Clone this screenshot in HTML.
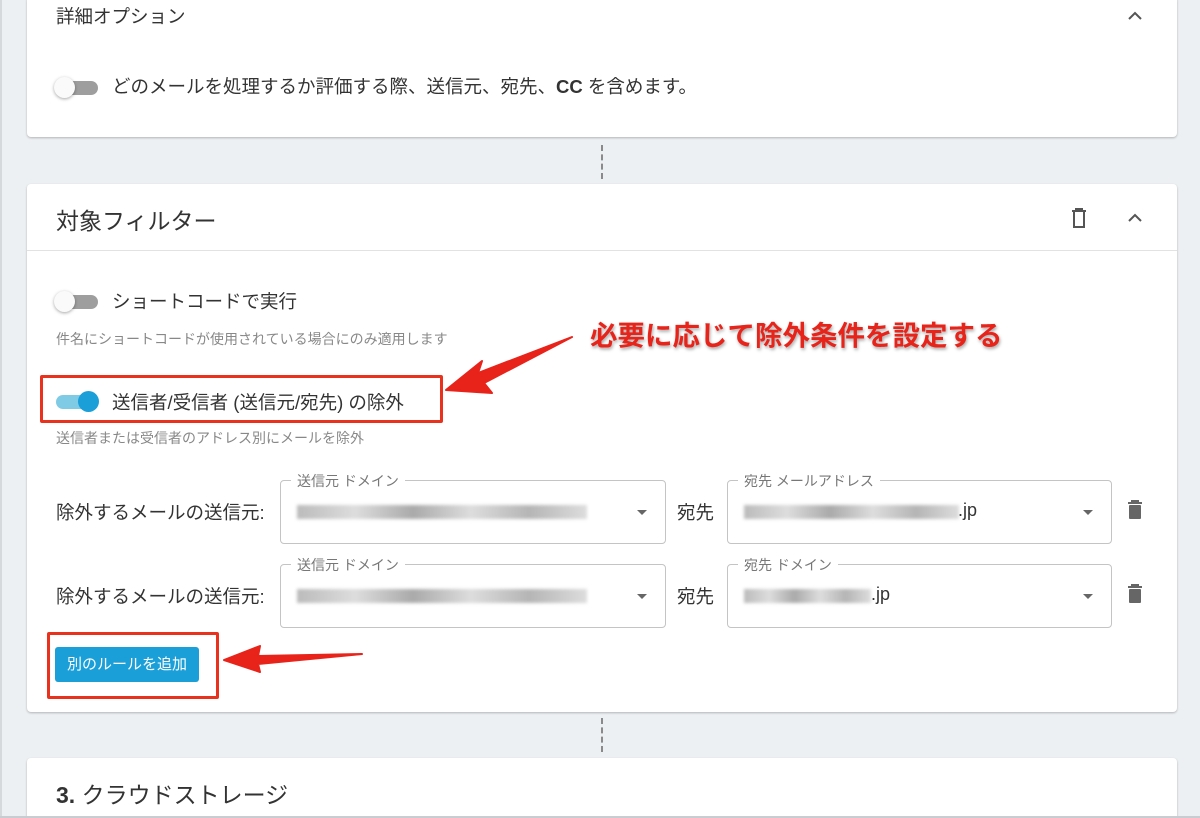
<!DOCTYPE html>
<html style="overflow:hidden;width:1200px;height:818px"><head><meta charset="utf-8"><style>
*{box-sizing:border-box;margin:0;padding:0}
body{width:1200px;height:818px;background:#edf0f3;font-family:"Liberation Sans","Noto Sans CJK JP",sans-serif;color:#333;position:relative;overflow:hidden}
.card{position:absolute;left:27px;width:1150px;background:#fff;border-radius:4px;box-shadow:0 1px 2px rgba(0,0,0,.25)}
.abs{position:absolute;white-space:nowrap}
.tog{position:absolute;width:42px;height:14px;border-radius:7px;background:#9e9e9e}
.tog::after{content:"";position:absolute;left:-2px;top:-4px;width:21px;height:21px;border-radius:50%;background:#fafafa;box-shadow:0 1px 3px rgba(0,0,0,.35)}
.tog.on{background:#7fcbe6}
.tog.on::after{left:22px;background:#1a9fd9;box-shadow:none}
.dash{position:absolute;left:601px;width:0;border-left:2px dashed #8a8a8a}
.fld{position:absolute;height:64px;border:1px solid #c4c4c4;border-radius:4px}
.fld .lb{position:absolute;top:-10px;left:10px;background:#fff;padding:0 6px;font-size:14px;color:#777}
.fld .blur{position:absolute;top:24px;left:16px;height:14px;background:linear-gradient(90deg,#bbb,#ddd 20%,#aaa 40%,#ddd 60%,#b5b5b5 80%,#ddd);filter:blur(1.5px)}
.fld .arr{position:absolute;right:18px;top:29px;border:5px solid transparent;border-top:5px solid #666}
.fld .v{position:absolute;top:19px;font-size:18px;color:#333}
.sub{font-size:14px;color:#888}
.t18{font-size:18.5px}
.redbox{position:absolute;border:3px solid #e8321e;border-radius:2px}
</style></head><body>
<div class="abs" style="left:0;top:0;width:2px;height:818px;background:#d6d9dc"></div>
<div class="abs" style="left:0;top:816px;width:1200px;height:2px;background:#c9ccd0;z-index:5"></div>
<div class="card" style="top:-4px;height:141px">
 <div class="abs" style="left:29px;top:7px;font-size:18.5px">詳細オプション</div>
 <svg class="abs" style="left:1100px;top:14px" width="16" height="12"><path d="M2 9 L8 3 L14 9" stroke="#555" stroke-width="2" fill="none"/></svg>
 <div class="tog" style="left:29px;top:85px"></div>
 <div class="abs t18" style="left:85px;top:77px">どのメールを処理するか評価する際、送信元、宛先、<b>CC</b> を含めます。</div>
</div>
<div class="dash" style="top:145px;height:34px"></div>
<div class="card" style="top:184px;height:528px">
 <div class="abs" style="left:29px;top:18px;font-size:23px">対象フィルター</div>
 <svg class="abs" style="left:1043px;top:23px" width="18" height="22"><path d="M2 4H16M6 4V2H12V4M4 4V20H14V4" stroke="#555" stroke-width="2" fill="none"/></svg>
 <svg class="abs" style="left:1100px;top:28px" width="16" height="12"><path d="M2 9 L8 3 L14 9" stroke="#555" stroke-width="2" fill="none"/></svg>
 <div class="abs" style="left:0;top:66px;width:1150px;border-top:1px solid #e2e2e2"></div>
 <div class="tog" style="left:29px;top:111px"></div>
 <div class="abs t18" style="left:85px;top:104px">ショートコードで実行</div>
 <div class="abs sub" style="left:29px;top:145px">件名にショートコードが使用されている場合にのみ適用します</div>
 <div class="tog on" style="left:29px;top:211px"></div>
 <div class="abs t18" style="left:85px;top:205px">送信者/受信者 (送信元/宛先) の除外</div>
 <div class="abs sub" style="left:29px;top:244px">送信者または受信者のアドレス別にメールを除外</div>

 <div class="abs t18" style="left:29px;top:315px">除外するメールの送信元:</div>
 <div class="fld" style="left:253px;top:296px;width:386px"><span class="lb">送信元 ドメイン</span><div class="blur" style="width:290px"></div><div class="arr"></div></div>
 <div class="abs t18" style="left:650px;top:315px">宛先</div>
 <div class="fld" style="left:700px;top:296px;width:385px"><span class="lb">宛先 メールアドレス</span><div class="blur" style="width:215px"></div><span class="v" style="left:230px">.jp</span><div class="arr"></div></div>
 <svg class="abs" style="left:1100px;top:316px" width="16" height="20"><path d="M1 3H15M5 3V1H11V3" stroke="#666" stroke-width="2" fill="none"/><rect x="2" y="5" width="12" height="14" rx="1" fill="#666"/></svg>

 <div class="abs t18" style="left:29px;top:399px">除外するメールの送信元:</div>
 <div class="fld" style="left:253px;top:380px;width:386px"><span class="lb">送信元 ドメイン</span><div class="blur" style="width:290px"></div><div class="arr"></div></div>
 <div class="abs t18" style="left:650px;top:399px">宛先</div>
 <div class="fld" style="left:700px;top:380px;width:385px"><span class="lb">宛先 ドメイン</span><div class="blur" style="width:127px"></div><span class="v" style="left:143px">.jp</span><div class="arr"></div></div>
 <svg class="abs" style="left:1100px;top:400px" width="16" height="20"><path d="M1 3H15M5 3V1H11V3" stroke="#666" stroke-width="2" fill="none"/><rect x="2" y="5" width="12" height="14" rx="1" fill="#666"/></svg>

 <div class="abs" style="left:28px;top:463px;width:144px;height:35px;background:#1a9fd9;border-radius:3px;color:#fff;font-size:15px;text-align:center;line-height:35px">別のルールを追加</div>
</div>
<div class="dash" style="top:718px;height:34px"></div>
<div class="card" style="top:758px;height:80px">
 <div class="abs" style="left:29px;top:18px;font-size:23px"><b>3.</b> クラウドストレージ</div>
</div>

<div class="redbox" style="left:40px;top:375px;width:403px;height:48px"></div>
<div class="redbox" style="left:47px;top:632px;width:172px;height:67px"></div>
<div class="abs" style="left:590px;top:313px;font-size:27.5px;font-weight:bold;color:#e8231a;text-shadow:1px 2px 3px rgba(0,0,0,.35)">必要に応じて除外条件を設定する</div>
<svg class="abs" style="left:0;top:0" width="1200" height="818">
 <path d="M572 337 L478 373 L482 361 L446 390 L492 393 L484 383 Z" fill="#e8231a" stroke="#e8231a" stroke-width="2" stroke-linejoin="round"/>
 <path d="M362 654 L258 656 L260 646 L224 660 L260 672 L258 664 Z" fill="#e8231a" stroke="#e8231a" stroke-width="2" stroke-linejoin="round"/>
</svg>
</body></html>
